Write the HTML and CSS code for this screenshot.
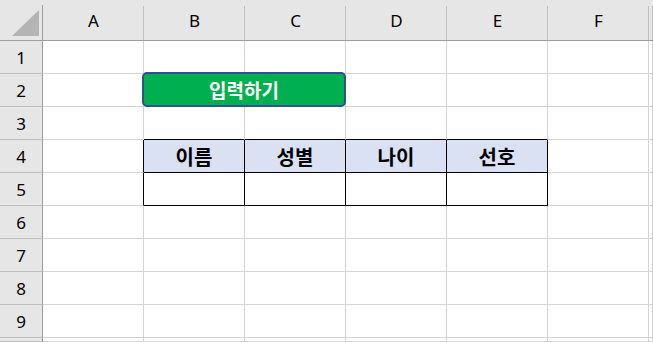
FILE: index.html
```html
<!DOCTYPE html>
<html lang="ko">
<head>
    <meta charset="UTF-8">
    <meta name="viewport" content="width=device-width, initial-scale=1.0">
    <title>입력하기</title>
    <link rel="stylesheet" href="styles.css">
</head>
<body>
    <div class="sheet">
        <!-- 열 머리글 -->
        <div class="corner">
            <svg width="42" height="40" viewBox="0 0 42 40"><polygon points="12,36 39,36 39,10" fill="#b4b4b4"/></svg>
        </div>
        <div class="col-head">A</div>
        <div class="col-head">B</div>
        <div class="col-head">C</div>
        <div class="col-head">D</div>
        <div class="col-head">E</div>
        <div class="col-head">F</div>
        <div class="col-head"></div>

        <!-- 1 -->
        <div class="row-head">1</div>
        <div class="cell"></div><div class="cell"></div><div class="cell"></div><div class="cell"></div><div class="cell"></div><div class="cell"></div><div class="cell"></div>

        <!-- 2 : 버튼 -->
        <div class="row-head">2</div>
        <div class="cell"></div>
        <div class="cell cell-btn">
            <button type="button" class="btn">입력하기</button>
        </div>
        <div class="cell"></div><div class="cell"></div><div class="cell"></div><div class="cell"></div><div class="cell"></div>

        <!-- 3 -->
        <div class="row-head">3</div>
        <div class="cell"></div>
        <div class="cell edge-b"></div><div class="cell edge-b"></div><div class="cell edge-b"></div><div class="cell edge-b"></div>
        <div class="cell"></div><div class="cell"></div>

        <!-- 4 : 표 머리 -->
        <div class="row-head">4</div>
        <div class="cell edge-r"></div>
        <div class="cell th">이름</div>
        <div class="cell th">성별</div>
        <div class="cell th">나이</div>
        <div class="cell th">선호</div>
        <div class="cell"></div><div class="cell"></div>

        <!-- 5 : 입력 칸 -->
        <div class="row-head">5</div>
        <div class="cell edge-r"></div>
        <div class="cell td"></div><div class="cell td"></div><div class="cell td"></div><div class="cell td"></div>
        <div class="cell"></div><div class="cell"></div>

        <!-- 6 -->
        <div class="row-head">6</div>
        <div class="cell"></div><div class="cell"></div><div class="cell"></div><div class="cell"></div><div class="cell"></div><div class="cell"></div><div class="cell"></div>

        <!-- 7 -->
        <div class="row-head">7</div>
        <div class="cell"></div><div class="cell"></div><div class="cell"></div><div class="cell"></div><div class="cell"></div><div class="cell"></div><div class="cell"></div>

        <!-- 8 -->
        <div class="row-head">8</div>
        <div class="cell"></div><div class="cell"></div><div class="cell"></div><div class="cell"></div><div class="cell"></div><div class="cell"></div><div class="cell"></div>

        <!-- 9 -->
        <div class="row-head">9</div>
        <div class="cell"></div><div class="cell"></div><div class="cell"></div><div class="cell"></div><div class="cell"></div><div class="cell"></div><div class="cell"></div>

        <!-- 10 (화면 아래로 잘림) -->
        <div class="row-head"></div>
        <div class="cell"></div><div class="cell"></div><div class="cell"></div><div class="cell"></div><div class="cell"></div><div class="cell"></div><div class="cell"></div>
    </div>
</body>
</html>
```

FILE: styles.css
```css
body {
    margin: 0;
    width: 653px;
    height: 342px;
    overflow: hidden;
    background: #ffffff;
    font-family: "Noto Sans", "Noto Sans CJK KR", sans-serif;
}

.sheet {
    display: grid;
    grid-template-columns: 43px repeat(6, 101px) 4px;
    grid-template-rows: 41px repeat(9, 33px) 4px;
    background: #ffffff;
}

.corner {
    box-sizing: border-box;
    background:
        linear-gradient(#9e9e9e, #9e9e9e) right bottom / 1px 35px no-repeat,
        #e6e6e6;
    border-bottom: 1px solid #9e9e9e;
}

.corner svg {
    display: block;
}

.col-head {
    box-sizing: border-box;
    display: flex;
    align-items: center;
    justify-content: center;
    padding-top: 1px;
    font-size: 17px;
    color: #000000;
    background:
        linear-gradient(#c0c0c0, #c0c0c0) right bottom / 1px 34px no-repeat,
        #e6e6e6;
    border-bottom: 1px solid #9e9e9e;
}

.row-head {
    box-sizing: border-box;
    display: flex;
    align-items: center;
    justify-content: center;
    padding-top: 1px;
    font-size: 17px;
    color: #000000;
    background: #e6e6e6;
    border-right: 1px solid #9e9e9e;
    border-bottom: 1px solid #bdbdbd;
}

.cell {
    box-sizing: border-box;
    border-right: 1px solid #d4d4d4;
    border-bottom: 1px solid #d4d4d4;
}

.edge-b {
    border-bottom-color: #000000;
}

.edge-r {
    border-right-color: #000000;
}

.th,
.td {
    border-right-color: #000000;
    border-bottom-color: #000000;
}

.th {
    display: flex;
    align-items: center;
    justify-content: center;
    background: #d9e1f2;
    font-family: "Noto Sans CJK KR", sans-serif;
    font-weight: bold;
    font-size: 20px;
    color: #000000;
}

.cell-btn {
    position: relative;
    z-index: 1;
}

.btn {
    box-sizing: border-box;
    display: flex;
    align-items: center;
    justify-content: center;
    width: 204px;
    height: 35px;
    margin: -2px 0 0 -2px;
    padding: 0;
    background: #00b050;
    border: 2px solid #2f528f;
    border-radius: 5px;
    color: #ffffff;
    font-family: "Noto Sans CJK KR", sans-serif;
    font-weight: bold;
    font-size: 19px;
}
```
